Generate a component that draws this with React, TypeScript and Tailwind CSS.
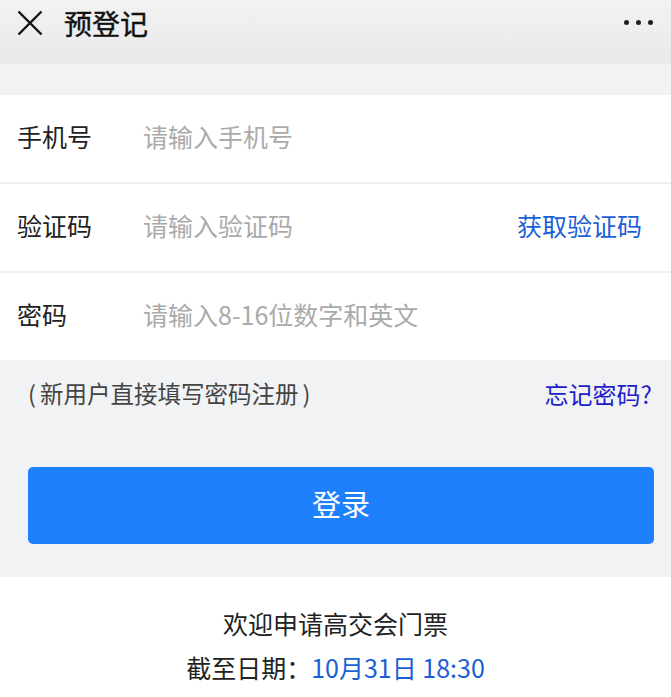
const font = { fontFamily: '"Noto Sans CJK SC", "Noto Sans", sans-serif' };

function Row({ label, placeholder, action }: { label: string; placeholder: string; action?: string }) {
  return (
    <div className="flex h-[87px] items-center bg-white pb-[4px] pl-[17px] pr-[29px] text-[25px]">
      <span className="w-[126px] text-[#222]">{label}</span>
      <input
        className="min-w-0 flex-1 bg-transparent text-[#222] outline-none placeholder:text-[#aaaaaa]"
        placeholder={placeholder}
      />
      {action && <span className="text-[#1a5fd6]">{action}</span>}
    </div>
  );
}

export default function App() {
  return (
    <div className="flex h-[697px] w-[671px] flex-col overflow-hidden bg-white" style={font}>
      <header className="flex h-[64px] items-start bg-gradient-to-b from-[#f2f2f2] to-[#e9e9e9] pl-[17px] pr-[18px] pt-[9px]">
        <svg width="26" height="26" viewBox="0 0 26 26" className="mt-[1px]">
          <path d="M1.5 1.5 L24.5 24.5 M24.5 1.5 L1.5 24.5" stroke="#111" strokeWidth="2.4" fill="none" />
        </svg>
        <span className="ml-[21px] -mt-[6px] text-[28px] leading-[40px] text-[#111] [-webkit-text-stroke:0.4px_#111]">预登记</span>
        <div className="ml-auto mt-[11px] flex gap-[7px]">
          <span className="h-[5px] w-[5px] rounded-full bg-[#222]" />
          <span className="h-[5px] w-[5px] rounded-full bg-[#222]" />
          <span className="h-[5px] w-[5px] rounded-full bg-[#222]" />
        </div>
      </header>
      <div className="h-[31px] bg-[#f1f2f4]" />
      <div className="flex flex-col gap-[2px] bg-[#efefef]">
        <Row label="手机号" placeholder="请输入手机号" />
        <Row label="验证码" placeholder="请输入验证码" action="获取验证码" />
        <Row label="密码" placeholder="请输入8-16位数字和英文" />
      </div>
      <div className="flex flex-col bg-[#f1f2f4] pb-[33px] pl-[28px] pr-[17px]">
        <div className="flex h-[74px] items-center justify-between pb-[6px] text-[23.5px] text-[#444]">
          <span className="flex items-center">
            <span>(</span>
            <span className="ml-[4px]">新用户直接填写密码注册</span>
            <span className="ml-[4px]">)</span>
          </span>
          <span className="mr-[2px] text-[24px] text-[#1c1cc8]">忘记密码?</span>
        </div>
        <button className="mt-[33px] flex h-[77px] items-center justify-center rounded-[5px] bg-[#1f80fe] pb-[4px] text-[29px] text-white">
          登录
        </button>
      </div>
      <div className="flex flex-col items-center pt-[24px] text-[25px] text-[#222]">
        <span className="leading-[44px]">欢迎申请高交会门票</span>
        <span className="leading-[44px]">
          截至日期：<span className="text-[#1a5fd6]">10月31日 18:30</span>
        </span>
      </div>
    </div>
  );
}
